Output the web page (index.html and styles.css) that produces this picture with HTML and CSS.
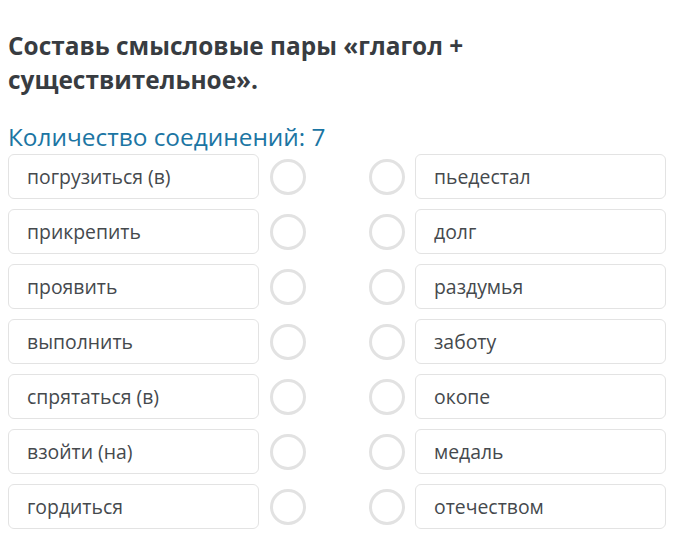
FILE: index.html
```html
<!DOCTYPE html>
<html lang="ru">
<head>
    <meta charset="UTF-8">
    <meta name="viewport" content="width=device-width, initial-scale=1.0">
    <title>Смысловые пары</title>
    <link rel="stylesheet" href="styles.css">
</head>
<body>
    <div class="task">
        <h1 class="title">Составь смысловые пары «глагол + существительное».</h1>
        <div class="count">Количество соединений: 7</div>
        <div class="pairs">
            <div class="row">
                <div class="item">погрузиться (в)</div>
                <div class="dot"></div>
                <div class="dot"></div>
                <div class="item">пьедестал</div>
            </div>
            <div class="row">
                <div class="item">прикрепить</div>
                <div class="dot"></div>
                <div class="dot"></div>
                <div class="item">долг</div>
            </div>
            <div class="row">
                <div class="item">проявить</div>
                <div class="dot"></div>
                <div class="dot"></div>
                <div class="item">раздумья</div>
            </div>
            <div class="row">
                <div class="item">выполнить</div>
                <div class="dot"></div>
                <div class="dot"></div>
                <div class="item">заботу</div>
            </div>
            <div class="row">
                <div class="item">спрятаться (в)</div>
                <div class="dot"></div>
                <div class="dot"></div>
                <div class="item">окопе</div>
            </div>
            <div class="row">
                <div class="item">взойти (на)</div>
                <div class="dot"></div>
                <div class="dot"></div>
                <div class="item">медаль</div>
            </div>
            <div class="row">
                <div class="item">гордиться</div>
                <div class="dot"></div>
                <div class="dot"></div>
                <div class="item">отечеством</div>
            </div>
        </div>
    </div>
</body>
</html>
```
FILE: styles.css
```css
body {
    margin: 0;
    background: #ffffff;
    font-family: "Open Sans", "Noto Sans", sans-serif;
}

.task {
    padding: 29px 8px 0 8px;
    width: 659px;
}

.title {
    margin: 0;
    font-size: 24.4px;
    font-weight: 700;
    line-height: 34px;
    color: #383c41;
    width: 480px;
}

.count {
    margin-top: 25px;
    font-size: 24.4px;
    line-height: 30px;
    color: #1b75a3;
}

.pairs {
    margin-top: 2px;
    display: flex;
    flex-direction: column;
    gap: 10px;
}

.row {
    display: flex;
    align-items: center;
}

.item {
    width: 251px;
    height: 45px;
    box-sizing: border-box;
    border: 1px solid #e3e3e3;
    border-radius: 6px;
    padding-left: 18px;
    display: flex;
    align-items: center;
    font-size: 19.4px;
    color: #45494d;
}

.dot {
    width: 36px;
    height: 36px;
    box-sizing: border-box;
    border: 3px solid #e2e2e2;
    border-radius: 50%;
}

.row .item:first-child + .dot {
    margin-left: 11px;
}

.row .dot + .dot {
    margin-left: 63px;
    margin-right: 10px;
}
```
